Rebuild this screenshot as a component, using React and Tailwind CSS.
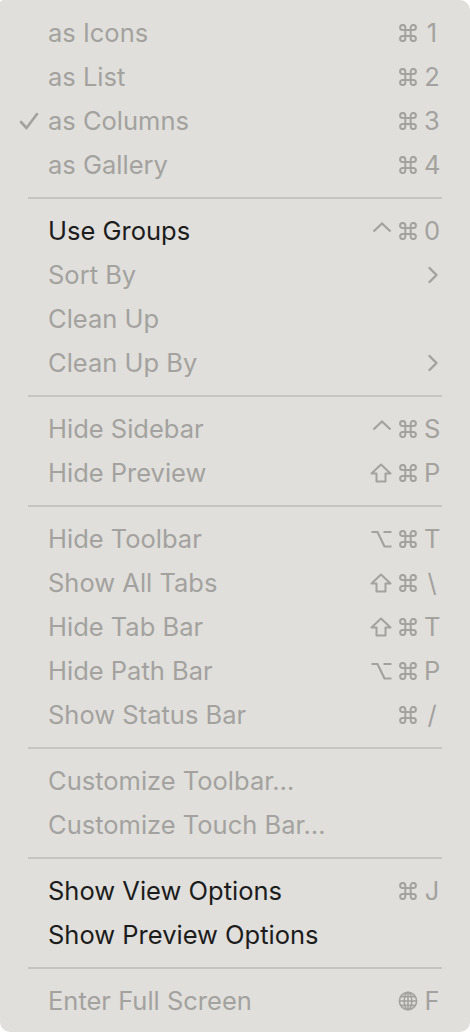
import React from 'react';

const dim = 'text-[#a3a29f]';
const dark = 'text-[#1c1c1c]';
const grey = '#a3a29f';

const Check = () => (
    <svg width="20" height="18" viewBox="0 0 20 18" className="absolute left-[19px] top-[13px]">
        <path d="M2 10 L7.5 16 L18 2" fill="none" stroke={grey} strokeWidth="2.6" strokeLinecap="round" strokeLinejoin="round" />
    </svg>
);

const Chevron = () => (
    <svg width="12" height="18" viewBox="0 0 12 18" className="mr-[1px]">
        <path d="M2.5 2 L9.5 9 L2.5 16" fill="none" stroke={grey} strokeWidth="2.4" strokeLinecap="round" strokeLinejoin="round" />
    </svg>
);

const Globe = () => (
    <svg width="20" height="20" viewBox="0 0 20 20">
        <g fill="none" stroke={grey} strokeWidth="1.6">
            <circle cx="10" cy="10" r="8.6" />
            <ellipse cx="10" cy="10" rx="3.8" ry="8.6" />
            <line x1="10" y1="1.4" x2="10" y2="18.6" />
            <line x1="1.4" y1="10" x2="18.6" y2="10" />
            <path d="M3 5.6 H17 M3 14.4 H17" />
        </g>
    </svg>
);

const Cmd = () => (
    <svg width="20" height="18" viewBox="0 0 20 18">
        <path
            d="M7.3 14.5 V3.5 A2.6 2.6 0 1 0 4.7 6.1 H15.3 A2.6 2.6 0 1 0 12.7 3.5 V14.5 A2.6 2.6 0 1 0 15.3 11.9 H4.7 A2.6 2.6 0 1 0 7.3 14.5 Z"
            fill="none" stroke={grey} strokeWidth="2" strokeLinejoin="round"
        />
    </svg>
);

const Ctrl = () => (
    <svg width="20" height="18" viewBox="0 0 20 18">
        <path d="M1.5 9.5 L10 1.5 L18.5 9.5" fill="none" stroke={grey} strokeWidth="2.2" strokeLinejoin="miter" />
    </svg>
);

const Shift = () => (
    <svg width="22" height="20" viewBox="0 0 22 20">
        <path d="M11 1.5 L20.5 10.5 H15.5 V18.5 H6.5 V10.5 H1.5 Z" fill="none" stroke={grey} strokeWidth="2" strokeLinejoin="round" />
    </svg>
);

const Opt = () => (
    <svg width="21" height="18" viewBox="0 0 21 18">
        <path d="M0.5 2 H6.5 L13.5 16.5 H20.5 M12.5 2 H20.5" fill="none" stroke={grey} strokeWidth="2.2" />
    </svg>
);

const icons = { cmd: Cmd, ctrl: Ctrl, shift: Shift, opt: Opt, globe: Globe };

const Sep = () => (
    <div className="h-[22px] flex items-center px-[28px]">
        <div className="h-[2px] w-full bg-[#c6c5c1]" />
    </div>
);

const Shortcut = ({ mods = [], keyChar }) => (
    <div className={`flex items-center gap-[6px] ${dim}`}>
        {mods.map((m) => {
            const Icon = icons[m];
            return <Icon key={m} />;
        })}
        <span className="w-[16px] text-center">{keyChar}</span>
    </div>
);

const Item = ({ label, enabled, checked, shortcut, submenu }) => (
    <div className="relative h-[44px] flex items-center justify-between pl-[48px] pr-[30px]">
        {checked && <Check />}
        <span className={enabled ? dark : dim}>{label}</span>
        {shortcut}
        {submenu && <Chevron />}
    </div>
);

export default function App() {
    return (
        <div className="bg-white min-h-screen">
            <div className="w-[470px] h-[1032px] bg-[#e0dfdb] rounded-[10px] rounded-tl-[4px] pt-[11px] font-['Inter',sans-serif] text-[25.5px] leading-none">
                <Item label="as Icons" shortcut={<Shortcut mods={['cmd']} keyChar="1" />} />
                <Item label="as List" shortcut={<Shortcut mods={['cmd']} keyChar="2" />} />
                <Item label="as Columns" checked shortcut={<Shortcut mods={['cmd']} keyChar="3" />} />
                <Item label="as Gallery" shortcut={<Shortcut mods={['cmd']} keyChar="4" />} />
                <Sep />
                <Item label="Use Groups" enabled shortcut={<Shortcut mods={['ctrl', 'cmd']} keyChar="0" />} />
                <Item label="Sort By" submenu />
                <Item label="Clean Up" />
                <Item label="Clean Up By" submenu />
                <Sep />
                <Item label="Hide Sidebar" shortcut={<Shortcut mods={['ctrl', 'cmd']} keyChar="S" />} />
                <Item label="Hide Preview" shortcut={<Shortcut mods={['shift', 'cmd']} keyChar="P" />} />
                <Sep />
                <Item label="Hide Toolbar" shortcut={<Shortcut mods={['opt', 'cmd']} keyChar="T" />} />
                <Item label="Show All Tabs" shortcut={<Shortcut mods={['shift', 'cmd']} keyChar="\" />} />
                <Item label="Hide Tab Bar" shortcut={<Shortcut mods={['shift', 'cmd']} keyChar="T" />} />
                <Item label="Hide Path Bar" shortcut={<Shortcut mods={['opt', 'cmd']} keyChar="P" />} />
                <Item label="Show Status Bar" shortcut={<Shortcut mods={['cmd']} keyChar="/" />} />
                <Sep />
                <Item label="Customize Toolbar…" />
                <Item label="Customize Touch Bar…" />
                <Sep />
                <Item label="Show View Options" enabled shortcut={<Shortcut mods={['cmd']} keyChar="J" />} />
                <Item label="Show Preview Options" enabled />
                <Sep />
                <Item label="Enter Full Screen" shortcut={<Shortcut mods={['globe']} keyChar="F" />} />
            </div>
        </div>
    );
}
